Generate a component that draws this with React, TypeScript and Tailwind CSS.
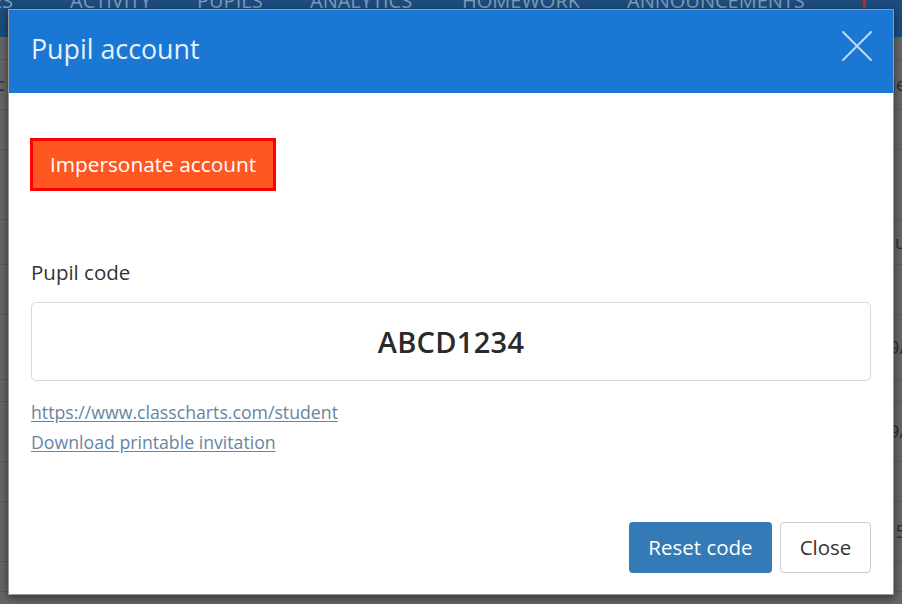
import React from "react";

const rowsLeft = [23, 50, 40, 70, 45, 50, 65, 22, 60, 40, 60, 30];

export default function App() {
  return (
    <div className="relative w-[902px] h-[604px] overflow-hidden bg-[#676767]" style={{ fontFamily: '"Open Sans", "Noto Sans", sans-serif' }}>
      {/* dimmed page behind */}
      <div className="flex flex-col">
        <div className="relative h-[37px] bg-[#1c4d7e] text-[20px] text-[#7f9cba] leading-none whitespace-nowrap overflow-hidden">
          <div className="flex items-start -mt-[9px]">
            <span className="ml-[-9px] w-[79px]">ES</span>
            <span className="w-[127px]">ACTIVITY</span>
            <span className="w-[113px]">PUPILS</span>
            <span className="w-[152px]">ANALYTICS</span>
            <span className="w-[165px]">HOMEWORK</span>
            <span className="w-[230px]">ANNOUNCEMENTS</span>
            <span className="text-[#a33] font-bold">1</span>
          </div>
        </div>
        {rowsLeft.map((h, i) => (
          <div key={i} className="border-b border-[#5b5b5b] flex justify-between items-center text-[18px] text-[#2c2c2c]" style={{ height: h }}>
            <span className="-ml-[4px]">{i === 1 ? "c" : i === 4 ? "i" : ""}</span>
            <span className="-mr-[4px]">{i === 1 ? "je" : i === 4 ? "u" : i === 6 ? "9/" : i === 8 ? "9/" : i === 10 ? "5" : ""}</span>
          </div>
        ))}
      </div>

      {/* modal */}
      <div className="absolute left-[8px] top-[9px] w-[886px] h-[586px] bg-white flex flex-col shadow-[0_3px_9px_rgba(0,0,0,0.5)] border border-[#9a9a9a]">
        <div className="h-[83px] bg-[#1a77d3] flex items-center justify-between pl-[22px] pr-[20px]">
          <h1 className="text-[26.8px] text-[#e5f1fc] leading-none pb-[4px]">Pupil account</h1>
          <svg width="32" height="32" viewBox="0 0 32 32" className="-mt-[12px]">
            <path d="M2 2 L30 30 M30 2 L2 30" stroke="rgba(255,255,255,0.72)" strokeWidth="2" strokeLinecap="round" />
          </svg>
        </div>
        <div className="flex-1 flex flex-col px-[21px] pt-[45px] pb-[21px]">
          <div>
            <button className="h-[53px] px-[17px] bg-[#ff5722] border-[3px] border-[#ff0000] text-white text-[20.8px] leading-none">
              Impersonate account
            </button>
          </div>
          <label className="mt-[67px] h-[28px] flex items-center text-[20.5px] text-[#333] pl-[1px]">Pupil code</label>
          <div className="mt-[16px] mx-[1px] h-[79px] border border-[#d3dbe2] rounded-[5px] flex items-center justify-center text-[29px] font-semibold text-[#2a2a2a] tracking-[0.3px]">
            ABCD1234
          </div>
          <div className="mt-[16px] flex flex-col items-start pl-[1px] text-[17.7px] text-[#6585a4] leading-[30px]">
            <a className="underline underline-offset-2">https://www.classcharts.com/student</a>
            <a className="underline underline-offset-2">Download printable invitation</a>
          </div>
          <div className="mt-auto flex justify-end gap-[8px] pr-[1px]">
            <button className="h-[51px] w-[143px] bg-[#337ab7] rounded-[4px] text-white text-[20.5px]">Reset code</button>
            <button className="h-[51px] w-[91px] bg-white border border-[#ccc] rounded-[4px] text-[#333] text-[20.5px]">Close</button>
          </div>
        </div>
      </div>
    </div>
  );
}
